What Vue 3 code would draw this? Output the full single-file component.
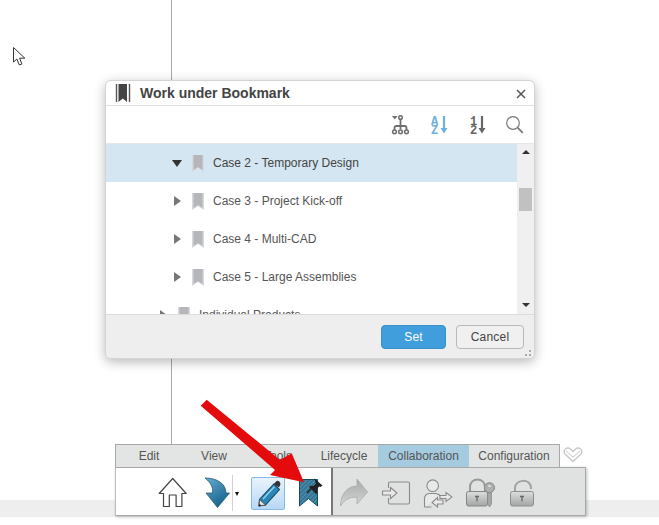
<script setup>
const rows = [
  { label: 'Case 2 - Temporary Design', selected: true, level: 'deep' },
  { label: 'Case 3 - Project Kick-off', selected: false, level: 'deep' },
  { label: 'Case 4 - Multi-CAD', selected: false, level: 'deep' },
  { label: 'Case 5 - Large Assemblies', selected: false, level: 'deep' },
  { label: 'Individual Products', selected: false, level: 'top' }
]
const tabs = ['Edit', 'View', 'Tools', 'Lifecycle', 'Collaboration', 'Configuration']
</script>

<template>
  <div class="page">
    <div class="vline"></div>
    <div class="band"></div>

    <svg class="cursor" viewBox="12 46 14 21" width="14" height="21">
      <path d="M13.5 47.500V62l3.400-3 2.400 6 2.600-1-2.300-5.800h5.200z" fill="#fff" stroke="#333" stroke-width="1"/>
    </svg>

    <section class="dialog">
      <header class="title">
        <svg class="title-icon" viewBox="115 82 16 20" width="16" height="20">
          <path d="M116.500 83v18M129.500 83v18" stroke="#555" stroke-width="1.400"/>
          <path d="M118.500 83h8.500v18l-4.200-3.500-4.300 3.500z" fill="#444"/>
        </svg>
        <h1>Work under Bookmark</h1>
        <svg class="close" viewBox="0 0 10 10" width="10" height="10">
          <path d="M1 1l8 8M9 1l-8 8" stroke="#555" stroke-width="1.500"/>
        </svg>
      </header>

      <div class="tools">
        <svg viewBox="391 114 19 20" width="19" height="20" fill="none" stroke="#6f6f6f" stroke-width="1.500">
          <path d="M392 115h5.500l-2.700 3.500z" fill="#6f6f6f" stroke="none"/>
          <circle cx="400.500" cy="116.500" r="1.800"/>
          <path d="M400.500 118.500v10M394.500 129v-2q0-2 2-2h8q2 0 2 2v2" stroke-width="1.800"/>
          <circle cx="394.500" cy="130.800" r="1.900"/><circle cx="400.500" cy="130.800" r="1.900"/><circle cx="406.500" cy="130.800" r="1.900"/>
        </svg>
        <svg class="t-az" viewBox="430 114 18 20" width="18" height="20">
          <text x="431" y="123.500" class="glyph blue">A</text>
          <text x="431" y="133" class="glyph blue">Z</text>
          <path d="M444 115v13" stroke="#6fb0d8" stroke-width="2.200"/>
          <path d="M440.500 127h7l-3.500 5.500z" fill="#6fb0d8"/>
        </svg>
        <svg class="t-num" viewBox="469 114 18 20" width="18" height="20">
          <text x="470" y="123.500" class="glyph grey">1</text>
          <text x="470" y="133" class="glyph grey">2</text>
          <path d="M482 115v13" stroke="#666" stroke-width="2.200"/>
          <path d="M478.500 127h7l-3.500 5.500z" fill="#666"/>
        </svg>
        <svg class="t-find" viewBox="505 114 19 20" width="19" height="20" fill="none" stroke="#777">
          <circle cx="513" cy="122" r="6.300" stroke-width="1.200"/>
          <path d="M517.800 126.800l5 5" stroke-width="1.800"/>
        </svg>
      </div>

      <div class="body">
        <ul class="tree">
          <li v-for="row in rows" :key="row.label" class="row" :class="[row.level, { selected: row.selected }]">
            <span class="twist" :class="{ open: row.selected }"></span>
            <svg class="mark" viewBox="0 0 12 17" width="12" height="17">
              <path d="M0 0h12v17l-6-4-6 4z" fill="#d6d8dc"/>
              <path d="M1.500 0h9v15l-4.500-3-4.500 3z" fill="#b5b6ba"/>
            </svg>
            <span class="label">{{ row.label }}</span>
          </li>
        </ul>
        <div class="scroll">
          <span class="up"></span>
          <span class="thumb"></span>
          <span class="down"></span>
        </div>
      </div>

      <footer class="foot">
        <button class="btn primary">Set</button>
        <button class="btn">Cancel</button>
        <svg class="grip" viewBox="0 0 6 6" width="6" height="6">
          <path d="M4 0h2v2H4zM0 4h2v2H0zM4 4h2v2H4z" fill="#aaa"/>
        </svg>
      </footer>
    </section>

    <div class="ribbon">
      <div class="tab-line">
        <nav class="tabs">
          <span v-for="t in tabs" :key="t" class="tab" :class="{ active: t === 'Collaboration' }">{{ t }}</span>
        </nav>
        <svg class="fold" viewBox="564 447 20 16" width="20" height="16">
          <path d="M574 461.500l-8-7.500q-2-3 .5-5t5 0l2.500 2.500 2.500-2.500q2.500-2 5 0t.5 5z" fill="#fff" stroke="#c8c8c8" stroke-width="1.400"/>
          <path d="M567 451l7 6 7-6" fill="none" stroke="#c8c8c8" stroke-width="1"/>
        </svg>
      </div>
      <div class="panel">
        <div class="left">
          <svg class="i-home" viewBox="158 477 30 31" width="30" height="31" fill="#fff" stroke="#444" stroke-width="1.200" stroke-linejoin="round">
            <path d="M172.700 478.500l-13.500 15h4.300v13h5.800v-11.500h6.800v11.500h5.800v-13h4.300z"/>
          </svg>
          <svg class="i-go" viewBox="204 477 26 31" width="26" height="31">
            <defs>
              <linearGradient id="goFill" x1="0" y1="0" x2=".6" y2="1">
                <stop offset="0" stop-color="#63add2"/><stop offset="1" stop-color="#17628c"/>
              </linearGradient>
            </defs>
            <path d="M205 478c11 0 21 5 21 15h3.500l-12 14.500-11.500-14.500h6.500c1-6-2.500-11-7.500-15z" fill="url(#goFill)" stroke="#245b78" stroke-width=".8"/>
          </svg>
          <span class="sep"></span>
          <span class="caret"></span>
          <div class="pencil-btn">
            <svg viewBox="253 478 32 30" width="32" height="30">
              <path d="M262.500 505.500l-2.500.5.500-6.500 14.300-15.500 5.700 5.500-14 15.500z" fill="#2a86b8" stroke="#17475f" stroke-width="1.100"/>
              <path d="M274.800 484l2.500-2.700q1.500-1 3 .3t1 3.200l-1.300 2.700z" fill="#333"/>
              <path d="M260.500 499.500l6 5.500-6.500 1z" fill="#e9e6df" stroke="#444" stroke-width=".8"/>
              <path d="M260 506l.3-2.500 2.100 2z" fill="#222"/>
              <path d="M264 499l11.500-12.500" stroke="#8fd0ef" stroke-width="1.500"/>
            </svg>
          </div>
          <svg class="i-mark" viewBox="299 477 25 31" width="25" height="31">
            <defs>
              <pattern id="hatch" width="3" height="3" patternUnits="userSpaceOnUse" patternTransform="rotate(45)">
                <rect width="3" height="3" fill="#4d8dac"/>
                <rect width="1.500" height="3" fill="#2f6e8d"/>
              </pattern>
            </defs>
            <path d="M300.500 479.500h18v26.500l-9-7.500-9 7.500z" fill="url(#hatch)" stroke="#174c68" stroke-width="1"/>
            <path d="M315.500 478.500l8 7-2 1.500-1.500-.5-2 3 .3 3.500-1.300 1-7-7 1.200-1.300 3.300.3 2.500-2.500-.8-1.800z" fill="#222"/>
            <path d="M313 487.500l-5 5.500" stroke="#222" stroke-width="1.400"/>
          </svg>
        </div>
        <div class="right">
          <svg class="i-fwd" viewBox="339 478 30 30" width="30" height="30">
            <defs>
              <linearGradient id="fwd" x1="0" y1="0" x2="0" y2="1">
                <stop offset="0" stop-color="#a8a8a8"/><stop offset="1" stop-color="#d4d6d5"/>
              </linearGradient>
            </defs>
            <path d="M357 479l10.500 13-10.500 12v-7c-8 0-13 3-16.500 9 0-12 7-20 16.500-20z" fill="url(#fwd)" stroke="#aaa" stroke-width=".8"/>
          </svg>
          <svg class="i-imp" viewBox="381 481 30 24" width="30" height="24" fill="none" stroke="#8a8a8a" stroke-width="1.100">
            <path d="M388.500 488v-4.500q0-1.500 1.500-1.500h18q1.500 0 1.500 1.500v19q0 1.500-1.500 1.500h-18q-1.500 0-1.500-1.500v-4.500"/>
            <path d="M382.500 491h8v-3.500l6.500 5.500-6.500 5.500v-3.500h-8z" fill="#e8e9e8"/>
          </svg>
          <svg class="i-user" viewBox="423 479 30 29" width="30" height="29" fill="none" stroke="#8a8a8a" stroke-width="1.100">
            <circle cx="432.700" cy="485.700" r="5.800" fill="#e8e9e8"/>
            <path d="M424.500 507v-8q0-5 5-5.500h6q4 .5 5 3M424.500 507h7" fill="#e8e9e8"/>
            <path d="M440 495.500h6v-3l6 4.500-6 4.500v-3h-6z" fill="#e8e9e8"/>
            <path d="M443 500h-5.500v-2.500l-5.500 5 5.500 4.500v-3h5.500z" fill="#e8e9e8"/>
          </svg>
          <svg class="i-lock" viewBox="465 478 31 30" width="31" height="30">
            <defs>
              <linearGradient id="lock" x1="0" y1="0" x2="0" y2="1">
                <stop offset="0" stop-color="#dcdedd"/><stop offset="1" stop-color="#a3a5a4"/>
              </linearGradient>
            </defs>
            <path d="M470 492v-5c0-10 15-10 15 0v5" fill="none" stroke="#999" stroke-width="2"/>
            <rect x="466.500" y="491.500" width="21" height="14.500" rx="2" fill="url(#lock)" stroke="#858585"/>
            <path d="M475 496.500h4M477 496.500v5" stroke="#666" stroke-width="1.300"/>
            <path d="M487.500 492v11l2 4 2-3v-11z" fill="#a5a7a6" stroke="#858585" stroke-width=".7"/>
            <circle cx="489.500" cy="487.700" r="5" fill="#adafae" stroke="#858585"/>
            <circle cx="489.500" cy="486" r="1.300" fill="#e0e2e1"/>
          </svg>
          <svg class="i-open" viewBox="509 479 26 28" width="26" height="28">
            <path d="M515 492v-4c0-9 16-10 16 0v1" fill="none" stroke="#a3a3a3" stroke-width="2"/>
            <rect x="510.500" y="491.500" width="23" height="14.500" rx="2" fill="url(#lock)" stroke="#8e8e8e"/>
            <path d="M520 496.500h4M522 496.500v5" stroke="#666" stroke-width="1.300"/>
          </svg>
        </div>
      </div>
    </div>

    <svg class="pointer" viewBox="198 397 110 88" width="110" height="88">
      <path d="M200.700 405.700l6-6 73.300 60.300 11.700-6.700 12.300 29-34-7.300 5-5z" fill="#e30b0b"/>
    </svg>
  </div>
</template>

<style>
html, body { margin: 0; background: #fff; }
</style>

<style scoped>
.page {
  position: relative;
  width: 659px;
  height: 525px;
  overflow: hidden;
  background: #fff;
  font-family: "Liberation Sans", Arial, sans-serif;
  color: #444;
}
.vline { position: absolute; left: 171px; top: 0; width: 1px; height: 445px; background: #a9a9a9; }
.band { position: absolute; left: 0; right: 0; top: 500px; height: 17px; background: #eeeeee; }
.cursor { position: absolute; left: 12px; top: 46px; }

.dialog {
  position: absolute;
  left: 105px;
  top: 80px;
  width: 428px;
  height: 277px;
  display: flex;
  flex-direction: column;
  background: #fff;
  border: 1px solid #d4d4d4;
  border-radius: 6px;
  box-shadow: 0 3px 12px rgba(0, 0, 0, .28);
  overflow: hidden;
}
.title {
  height: 24px;
  flex: none;
  display: flex;
  align-items: center;
  padding: 0 8px 0 9px;
  border-bottom: 1px solid #dedede;
}
.title h1 {
  margin: 0 0 0 9px;
  flex: 1;
  font-size: 14px;
  font-weight: 700;
  color: #444;
}
.close { margin-top: 2px; }

.tools {
  height: 37px;
  flex: none;
  display: flex;
  align-items: center;
  justify-content: flex-end;
  padding: 0 10px 0 0;
  border-bottom: 1px solid #e6e6e6;
}
.t-az { margin-left: 20px; }
.t-num { margin-left: 21px; }
.t-find { margin-left: 18px; }
.glyph { font-family: "Liberation Mono", monospace; font-weight: 700; font-size: 12px; }
.blue { fill: #6fb0d8; }
.grey { fill: #666; }

.body { flex: 1; min-height: 0; display: flex; }
.tree { flex: 1; margin: 0; padding: 0; list-style: none; overflow: hidden; }
.row {
  height: 38px;
  display: flex;
  align-items: center;
  font-size: 12px;
  color: #555;
}
.row.deep { padding-left: 66px; }
.row.top { padding-left: 52px; }
.row.selected { background: #d4e6f1; color: #444; }
.twist {
  width: 0;
  height: 0;
  margin: 0 11px 0 2px;
  border-left: 7px solid #777;
  border-top: 5px solid transparent;
  border-bottom: 5px solid transparent;
}
.twist.open {
  margin: 0 10px 0 0;
  border-left: 5.500px solid transparent;
  border-right: 5.500px solid transparent;
  border-top: 7px solid #333;
  border-bottom: 0;
}
.mark { flex: none; }
.label { margin-left: 9px; white-space: nowrap; }

.scroll {
  width: 17px;
  flex: none;
  display: flex;
  flex-direction: column;
  align-items: center;
  background: #f0f0f0;
}
.up, .down { width: 0; height: 0; border-left: 4px solid transparent; border-right: 4px solid transparent; }
.up { margin-top: 6px; border-bottom: 4px solid #333; }
.thumb { width: 13px; height: 23px; margin-top: 34px; background: #c1c1c1; }
.down { margin-top: auto; margin-bottom: 7px; border-top: 4px solid #333; }

.foot {
  position: relative;
  height: 43px;
  flex: none;
  display: flex;
  align-items: center;
  justify-content: flex-end;
  gap: 10px;
  padding-right: 10px;
  background: #eeeeee;
  border-top: 1px solid #dcdcdc;
}
.btn {
  width: 68px;
  height: 24px;
  padding: 0;
  font: 12px "Liberation Sans", Arial, sans-serif;
  letter-spacing: .2px;
  color: #444;
  background: #f0f0f0;
  border: 1px solid #b9b9b9;
  border-radius: 4px;
}
.btn.primary { width: 65px; color: #fff; background: #3f9edb; border-color: #3a90c6; }
.grip { position: absolute; right: 3px; bottom: 2px; }

.ribbon { position: absolute; left: 115px; top: 444px; width: 471px; }
.tab-line { display: flex; align-items: flex-start; height: 23px; }
.tabs {
  display: grid;
  grid-template-columns: 66px 64px 64px 68px 91px 90px;
  height: 22px;
  background: #e3e5e4;
  border: 1px solid #a8a8a8;
  border-bottom: 0;
}
.tab { display: flex; align-items: center; justify-content: center; font-size: 12px; color: #555; }
.tab.active { background: #a5cbe0; }
.fold { margin: 3px 0 0 3px; }

.panel {
  display: flex;
  height: 47px;
  background: #e0e2e1;
  border: 1px solid #a8a8a8;
  border-left-color: #bdbdbd;
  box-shadow: 1px 1px 3px rgba(0, 0, 0, .25);
}
.left {
  width: 215px;
  flex: none;
  display: flex;
  align-items: center;
  background: #fff;
  border-right: 2px solid #777;
}
.right { flex: 1; display: flex; align-items: center; }
.i-home { margin: 2px 0 0 42px; }
.i-go { margin: 2px 0 0 16px; }
.sep { width: 1px; height: 36px; margin: 3px 0 0 2px; background: #d2d2d2; }
.caret {
  width: 0;
  height: 0;
  margin: 4px 0 0 2px;
  border-left: 2.500px solid transparent;
  border-right: 2.500px solid transparent;
  border-top: 4px solid #111;
}
.pencil-btn {
  width: 32px;
  height: 31px;
  margin: 3px 0 0 12px;
  display: flex;
  align-items: center;
  background: linear-gradient(#e9f3fc, #b7d8f5);
  border: 1px solid #86b8e8;
  border-radius: 2px;
}
.i-mark { margin: 2px 0 0 13px; }
.i-fwd { margin: 3px 0 0 6px; }
.i-imp { margin: 3px 0 0 12px; }
.i-user { margin: 4px 0 0 12px; }
.i-lock { margin: 3px 0 0 12px; }
.i-open { margin: 3px 0 0 13px; }
.pointer { position: absolute; left: 198px; top: 397px; }
</style>
